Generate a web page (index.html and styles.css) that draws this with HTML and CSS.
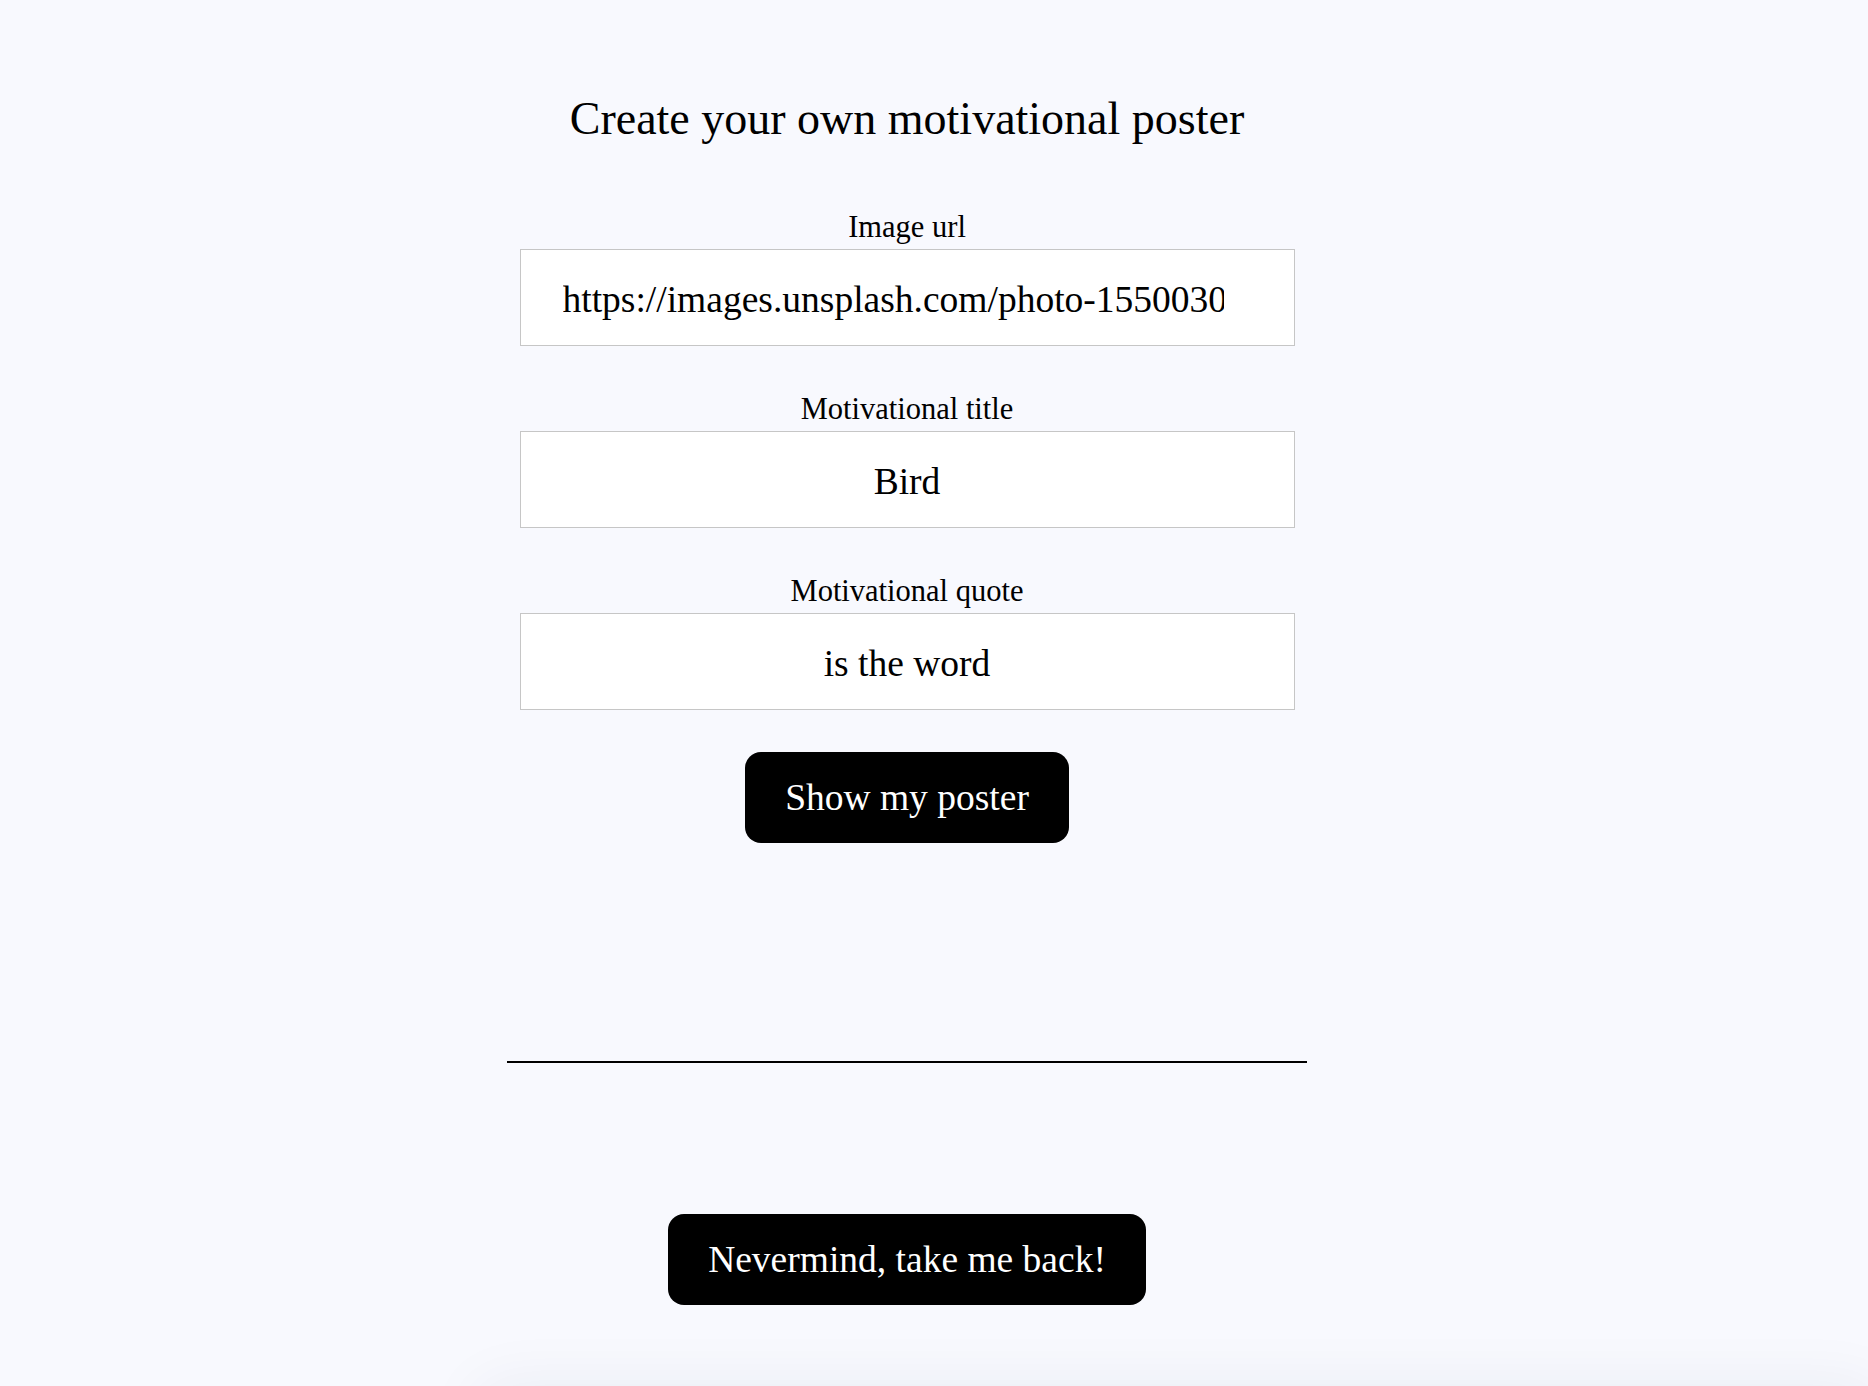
FILE: index.html
```html
<!DOCTYPE html>
<html lang="en">
<head>
<meta charset="utf-8">
<title>Create your own motivational poster</title>
<link rel="stylesheet" href="styles.css">
</head>
<body>
<main class="page">
  <h1 class="title">Create your own motivational poster</h1>
  <form class="poster-form">
    <label class="field">
      <span class="field-label">Image url</span>
      <input class="field-input field-input--url" type="text" value="https://images.unsplash.com/photo-1550030185-a5df4e4f0b1b">
    </label>
    <label class="field">
      <span class="field-label">Motivational title</span>
      <input class="field-input" type="text" value="Bird">
    </label>
    <label class="field">
      <span class="field-label">Motivational quote</span>
      <input class="field-input" type="text" value="is the word">
    </label>
    <button class="btn btn-submit" type="button">Show my poster</button>
  </form>
  <hr class="divider">
  <button class="btn btn-back" type="button">Nevermind, take me back!</button>
  <div class="poster-shadow"></div>
</main>
</body>
</html>
```

FILE: styles.css
```css
html {
  overflow: hidden;
}

body {
  margin: 0;
  background: #f8f9fe;
  color: #000;
  font-family: "Liberation Serif", "Times New Roman", serif;
}

.page {
  width: 1814px;
  display: flex;
  flex-direction: column;
  align-items: center;
}

.title {
  margin: 92px 0 0;
  font-size: 46px;
  line-height: 54px;
  font-weight: 400;
}

.poster-form {
  margin-top: 63px;
  display: flex;
  flex-direction: column;
  align-items: center;
}

.field {
  display: flex;
  flex-direction: column;
  align-items: center;
}

.field + .field {
  margin-top: 45px;
}

.field-label {
  font-size: 30.5px;
  line-height: 36px;
  margin-bottom: 4px;
}

.field-input {
  box-sizing: border-box;
  width: 775px;
  height: 97px;
  padding: 3px 42px 0;
  border: 1px solid #c6c6c6;
  border-radius: 0;
  background: #fff;
  font-family: inherit;
  font-size: 37.5px;
  color: #000;
  text-align: center;
  outline: none;
}

.field-input--url {
  padding-right: 70px;
}

.btn {
  height: 91px;
  padding: 0 40px;
  border: none;
  border-radius: 16px;
  background: #000;
  color: #fff;
  font-family: inherit;
  font-size: 37.5px;
  line-height: 91px;
  cursor: pointer;
}

.btn-submit {
  margin-top: 42px;
}

.divider {
  width: 800px;
  height: 2px;
  margin: 218px 0 0;
  border: 0;
  background: #000;
}

.btn-back {
  margin-top: 151px;
}

.poster-shadow {
  align-self: flex-start;
  margin-left: 490px;
  margin-top: 92px;
  width: 1378px;
  height: 300px;
  background: #f8f9fe;
  box-shadow: 0 0 60px 8px rgba(30, 40, 80, 0.07);
}
```
